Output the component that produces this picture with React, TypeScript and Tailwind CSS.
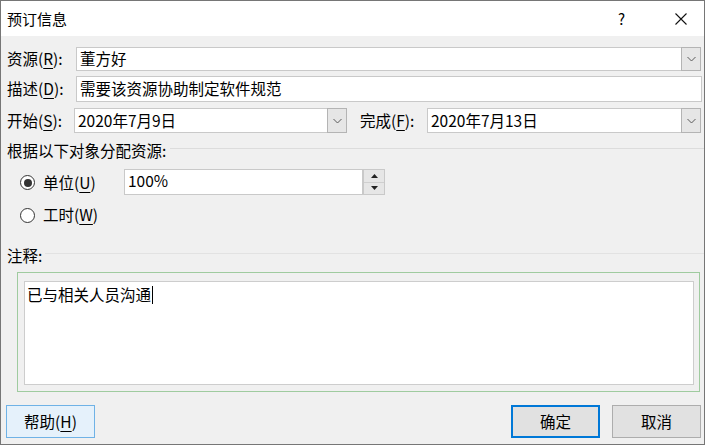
import React from "react";

const Chevron = () => (
  <svg width="9" height="6" viewBox="0 0 9 6" fill="none">
    <path d="M0.5 1 L4.5 5 L8.5 1" stroke="#5a5a5a" strokeWidth="1" />
  </svg>
);

const Combo = ({ value, className = "" }: { value?: string; className?: string }) => (
  <div className={`flex h-[24px] ${className}`}>
    <div className="flex-1 flex items-center border border-[#c9c9c9] bg-white pl-[3px] text-[15.5px] leading-none text-black">
      {value}
    </div>
    <div className="w-[20px] -ml-px flex items-center justify-center border border-[#b4b4b4] bg-[#e6e6e6]">
      <Chevron />
    </div>
  </div>
);

const U = ({ c }: { c: string }) => <span className="underline underline-offset-[3px] decoration-1">{c}</span>;

export default function App() {
  return (
    <div className="w-[705px] h-[445px] overflow-hidden border border-[#767676] bg-[#f0f0f0] font-['Noto_Sans_CJK_SC','Noto_Sans',sans-serif] text-[15.5px] text-black flex flex-col">
      {/* Title bar */}
      <div className="h-[35px] bg-white flex items-center pl-[6px] pr-[17px] shrink-0">
        <div className="text-[15px] leading-none">预订信息</div>
        <div className="flex-1" />
        <div className="text-[15px] leading-none mr-[50px]">?</div>
        <svg width="12" height="12" viewBox="0 0 12 12">
          <path d="M0.5 0.5 L11.5 11.5 M11.5 0.5 L0.5 11.5" stroke="#111" strokeWidth="1.1" />
        </svg>
      </div>

      {/* Row 1 */}
      <div className="mt-[11px] h-[24px] flex items-center pl-[6px] pr-[3px]">
        <div className="w-[69px] leading-none">资源(<U c="R" />):</div>
        <Combo value="董方好" className="flex-1" />
      </div>

      {/* Row 2 */}
      <div className="mt-[5px] h-[26px] flex items-center pl-[6px] pr-[2px]">
        <div className="w-[69px] leading-none">描述(<U c="D" />):</div>
        <div className="flex-1 h-[26px] flex items-center border border-[#c9c9c9] bg-white pl-[3px] leading-none">
          需要该资源协助制定软件规范
        </div>
      </div>

      {/* Row 3 */}
      <div className="mt-[6px] h-[25px] flex items-center pl-[6px] pr-[3px]">
        <div className="w-[67px] leading-none">开始(<U c="S" />):</div>
        <Combo value="2020年7月9日" className="w-[273px] h-[25px]" />
        <div className="ml-[13px] w-[67px] leading-none">完成(<U c="F" />):</div>
        <Combo value="2020年7月13日" className="flex-1 h-[25px]" />
      </div>

      {/* Header */}
      <div className="mt-[9px] h-[18px] flex items-center pl-[6px]">
        <div className="leading-none">根据以下对象分配资源:</div>
        <div className="flex-1 h-px bg-[#dcdcdc] ml-[4px] -mt-[5px]" />
      </div>

      {/* Radio 1 */}
      <div className="mt-[9px] h-[26px] flex items-center pl-[19px]">
        <div className="w-[104px] flex items-center gap-[8px] pt-[1px]">
          <div className="w-[15px] h-[15px] rounded-full border border-[#333] flex items-center justify-center bg-white">
            <div className="w-[8px] h-[8px] rounded-full bg-[#333]" />
          </div>
          <div className="leading-none">单位(<U c="U" />)</div>
        </div>
        <div className="w-[261px] h-[26px] flex">
          <div className="flex-1 border border-[#c9c9c9] bg-white pl-[3px] pt-[3px] leading-none">100%</div>
          <div className="w-[22px] flex flex-col border border-[#c9c9c9] bg-[#e6e6e6]">
            <div className="flex-1 flex items-center justify-center border-b border-[#cfcfcf]">
              <svg width="7" height="4" viewBox="0 0 7 4"><path d="M0 4 L3.5 0 L7 4 Z" fill="#222" /></svg>
            </div>
            <div className="flex-1 flex items-center justify-center">
              <svg width="7" height="4" viewBox="0 0 7 4"><path d="M0 0 L3.5 4 L7 0 Z" fill="#222" /></svg>
            </div>
          </div>
        </div>
      </div>

      {/* Radio 2 */}
      <div className="mt-[9px] h-[22px] flex items-center pl-[19px]">
        <div className="flex items-center gap-[8px]">
          <div className="w-[15px] h-[15px] rounded-full border border-[#333] bg-white" />
          <div className="leading-none">工时(<U c="W" />)</div>
        </div>
      </div>

      {/* Comment header */}
      <div className="mt-[21px] h-[18px] flex items-center pl-[6px]">
        <div className="leading-none">注释:</div>
        <div className="flex-1 h-px bg-[#e2e2e2] ml-[3px] -mt-[5px]" />
      </div>

      {/* Comment group */}
      <div className="mt-[7px] ml-[16px] mr-[4px] h-[120px] border border-[#9fcb9f] pt-[8px] pl-[6px] pr-[5px] pb-[6px] flex">
        <div className="flex-1 border border-[#cdcdcd] bg-white pl-[2px] pt-[4px]">
          <div className="flex items-center h-[18px] leading-none">
            <span>已与相关人员沟通</span>
            <span className="inline-block w-px h-[18px] bg-black ml-px" />
          </div>
        </div>
      </div>

      {/* Buttons */}
      <div className="mt-[13px] h-[33px] flex items-stretch pl-[5px] pr-[3px]">
        <div className="w-[89px] flex items-center justify-center border border-[#6fb2e6] bg-[#e5f1fb] leading-none">
          帮助(<U c="H" />)
        </div>
        <div className="flex-1" />
        <div className="w-[89px] flex items-center justify-center border-2 border-[#0078d7] bg-[#e1e1e1] leading-none">
          确定
        </div>
        <div className="ml-[12px] w-[89px] flex items-center justify-center border border-[#adadad] bg-[#e1e1e1] leading-none">
          取消
        </div>
      </div>
    </div>
  );
}
